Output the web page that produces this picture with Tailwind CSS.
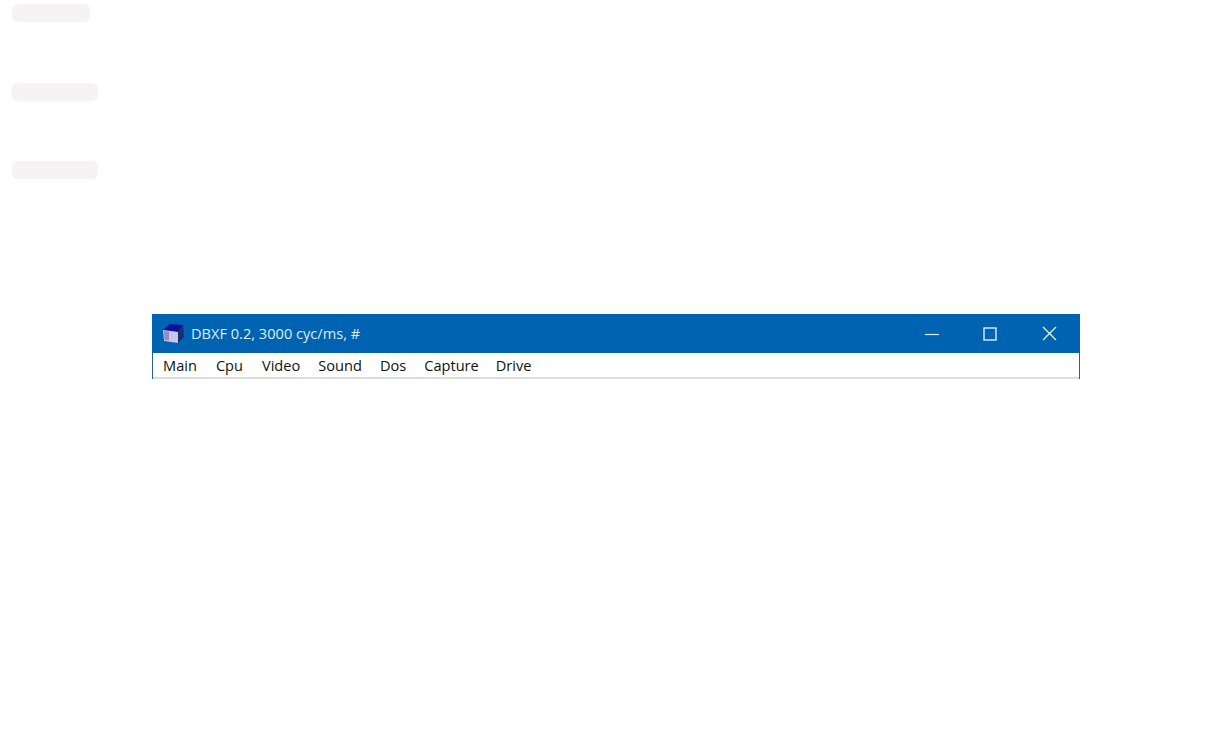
<!DOCTYPE html>
<html lang="en">
<head>
    <meta charset="UTF-8">
    <meta name="viewport" content="width=device-width, initial-scale=1.0">
    <title>DBXF</title>
    <script src="https://cdn.jsdelivr.net/npm/@tailwindcss/browser@4"></script>
</head>
<body class="bg-white h-[738px] overflow-hidden font-['Open_Sans',sans-serif]">
    <!-- Placeholder bars -->
    <div class="flex flex-col items-start pl-3 pt-1">
        <div class="w-[78px] h-[18px] rounded-md bg-[#f7f2f3]"></div>
        <div class="w-[86px] h-[18px] rounded-md bg-[#f7f2f3] mt-[61px]"></div>
        <div class="w-[86px] h-[18px] rounded-md bg-[#f7f2f3] mt-[60px]"></div>
    </div>

    <!-- Window -->
    <div class="w-[928px] ml-[152px] mt-[135px] border-x border-[#2a5f96]">
        <div class="flex items-center h-[39px] bg-[#0063b1] text-[#dceefa] -mx-px">
            <svg class="ml-[11px] w-[22px] h-[20px]" viewBox="0 0 22 20">
                <path d="M0 6 L7 0 L20 1 L15 8 Z" fill="#10109a"/>
                <path d="M0 6 L15 8 L15 19 L1 17 Z" fill="#c9c6e6"/>
                <path d="M1 7 L6 7.500 L6 16.500 L1.500 16 Z" fill="#8f8cc0"/>
                <path d="M15 8 L20 1 L21 13 L15 19 Z" fill="#17306e"/>
            </svg>
            <span class="ml-[6px] text-[14.6px]">DBXF 0.2, 3000 cyc/ms, #</span>
            <div class="ml-auto flex items-center">
                <svg class="w-[14px] h-[14px] mr-[44px]" viewBox="0 0 14 14"><path d="M0 7.500 H14" stroke="currentColor" stroke-width="1.200"/></svg>
                <svg class="w-[14px] h-[14px] mr-[45px]" viewBox="0 0 14 14"><rect x="1" y="1" width="12" height="12" fill="none" stroke="currentColor" stroke-width="1.400"/></svg>
                <svg class="w-[15px] h-[15px] mr-[23px]" viewBox="0 0 15 15"><path d="M1 1 L14 14 M14 1 L1 14" stroke="currentColor" stroke-width="1.400"/></svg>
            </div>
        </div>
        <nav class="flex items-center gap-[18px] h-[26px] pl-[10px] pt-px bg-white border-b-2 border-[#dcdcdc] text-[14.6px] text-[#111111]">
            <span class="mr-px">Main</span>
            <span class="mr-px">Cpu</span>
            <span>Video</span>
            <span>Sound</span>
            <span>Dos</span>
            <span class="-mr-px">Capture</span>
            <span>Drive</span>
        </nav>
    </div>
</body>
</html>
